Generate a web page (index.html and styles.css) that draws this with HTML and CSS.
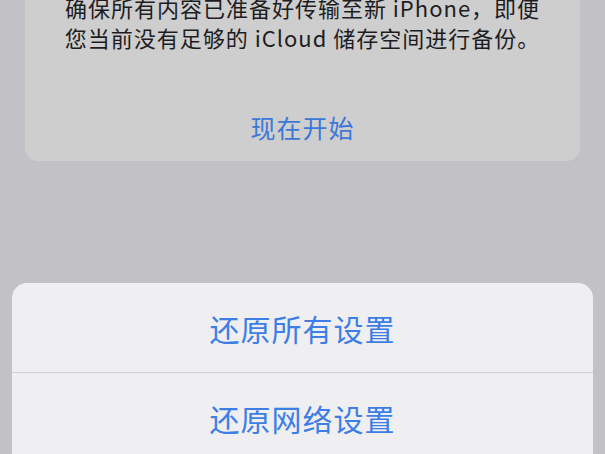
FILE: index.html
```html
<!DOCTYPE html>
<html lang="zh-CN">
<head>
<meta charset="utf-8">
<link rel="stylesheet" href="styles.css">
</head>
<body>
<div class="screen">
  <div class="card">
    <p class="desc">确保所有内容已准备好传输至新 iPhone，即便<br>您当前没有足够的 iCloud 储存空间进行备份。</p>
    <div class="card-btn">现在开始</div>
  </div>
  <div class="sheet">
    <div class="row">还原所有设置</div>
    <div class="row">还原网络设置</div>
  </div>
</div>
</body>
</html>
```
FILE: styles.css
```css
html, body {
  margin: 0;
  padding: 0;
  height: 100%;
  overflow: hidden;
}
body {
  background: #c2c1c6;
  font-family: "Noto Sans CJK SC", "Noto Sans", sans-serif;
}
.screen {
  display: flex;
  flex-direction: column;
}
.card {
  margin: -28px 25px 0;
  padding: 20px 0 9px;
  background: #cecece;
  border-radius: 13px;
  display: flex;
  flex-direction: column;
  align-items: center;
}
.desc {
  margin: 0;
  font-size: 22px;
  line-height: 30px;
  letter-spacing: 1px;
  color: #1d1d1f;
  text-align: center;
}
.card-btn {
  margin-top: 50px;
  height: 50px;
  display: flex;
  align-items: center;
  font-size: 25px;
  letter-spacing: 1px;
  color: #3b78d8;
}
.sheet {
  margin: 122px 12px 0;
  background: #efeff1;
  border-radius: 15px 15px 0 0;
  display: flex;
  flex-direction: column;
}
.row {
  height: 89px;
  display: flex;
  align-items: center;
  justify-content: center;
  font-size: 30px;
  letter-spacing: 1px;
  color: #3d7ee6;
}
.row + .row {
  border-top: 1px solid #cfcfd3;
}
```
